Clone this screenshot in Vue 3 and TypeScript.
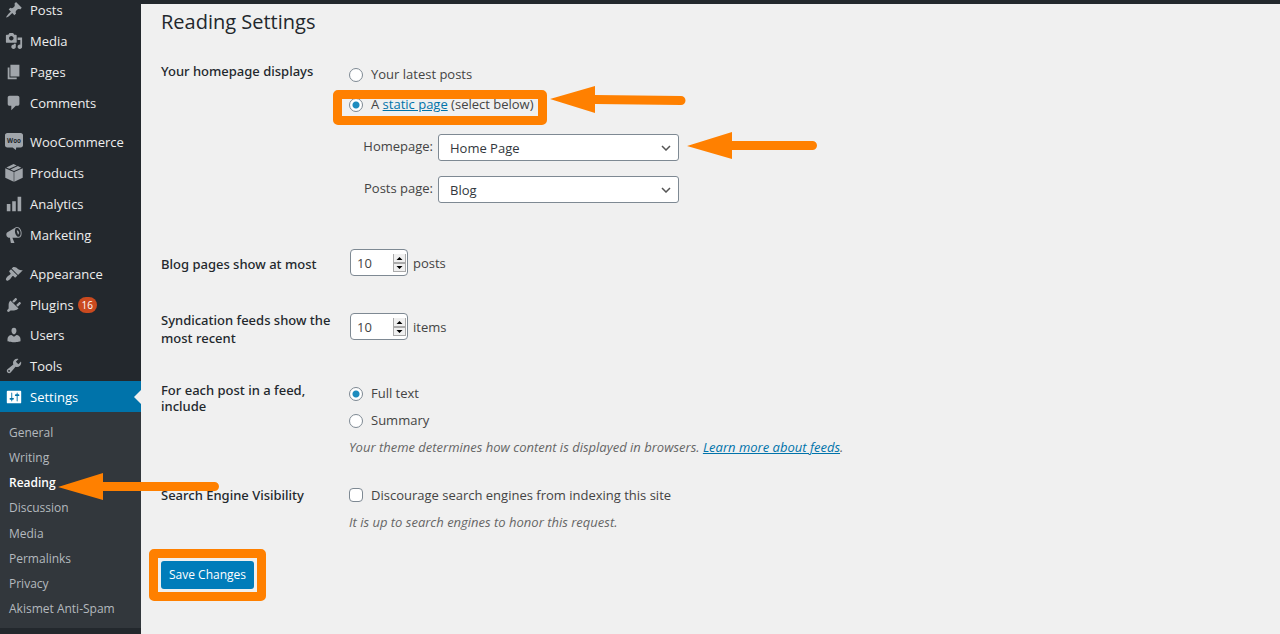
<script setup lang="ts">
import { ref } from 'vue'

interface MenuItem {
  label: string
  icon: string
  badge?: number
  woo?: boolean
  current?: boolean
}

const groups: MenuItem[][] = [
  [
    { label: 'Posts', icon: 'M10.44 3.02l1.82-1.82 6.36 6.35-1.83 1.82c-1.05-.68-2.48-.57-3.41.36l-.75.75c-.92.93-1.04 2.35-.35 3.41l-1.83 1.82-2.41-2.41-2.8 2.79c-.42.42-3.38 2.71-3.8 2.29s1.86-3.39 2.28-3.81l2.79-2.79L4.1 9.36l1.83-1.82c1.05.69 2.48.57 3.4-.36l.75-.75c.93-.92 1.05-2.35.36-3.41z' },
    { label: 'Media', icon: 'M13 11V4c0-.55-.45-1-1-1h-1.67L9 1H5L3.67 3H2c-.55 0-1 .45-1 1v7c0 .55.45 1 1 1h10c.55 0 1-.45 1-1zM7 4.5c1.38 0 2.5 1.12 2.5 2.5S8.38 9.5 7 9.5 4.5 8.38 4.5 7 5.62 4.5 7 4.5zM14 6h5v10.5c0 1.38-1.12 2.5-2.5 2.5S14 17.88 14 16.5s1.12-2.5 2.5-2.5c.17 0 .34.02.5.05V9h-3V6zm-4 8.05V13h2v3.5c0 1.38-1.12 2.5-2.5 2.5S7 17.88 7 16.5 8.12 14 9.5 14c.17 0 .34.02.5.05z' },
    { label: 'Pages', icon: 'M6 15V2h10v13H6zm-1 1h8v2H3V5h2v11z' },
    { label: 'Comments', icon: 'M5 2h9c1.1 0 2 .9 2 2v7c0 1.1-.9 2-2 2h-2l-5 5v-5H5c-1.1 0-2-.9-2-2V4c0-1.1.9-2 2-2z' },
  ],
  [
    { label: 'WooCommerce', icon: 'M2.500 0h15c1.400 0 2.500 1.100 2.500 2.500v11c0 1.400-1.100 2.500-2.500 2.500h-5l-.5 3-3.500-3h-6C1.100 16 0 14.900 0 13.500v-11C0 1.100 1.100 0 2.500 0z', woo: true },
    { label: 'Products', icon: 'M9.500 0L13 1.700 4.800 5.400 1.500 4zM14.300 2.200l3.900 1.900-8.200 3.800-3.900-1.800zM.3 4.800l9.400 4.200V19.800L.3 15.200zM19.700 4.800v10.400l-9.400 4.600V9z' },
    { label: 'Analytics', icon: 'M18 18V2h-4v16h4zm-6 0V7H8v11h4zm-6 0v-8H2v8h4z' },
    { label: 'Marketing', icon: 'M18.150 5.940c.46 1.620.38 3.220-.02 4.480-.42 1.280-1.260 2.180-2.300 2.480-.16.06-.26.06-.4.06-.06.02-.12.02-.18.02-.06.02-.14.02-.22.02h-6.800l2.220 5.500c.02.14-.06.26-.14.34-.08.1-.24.16-.34.16H6.950c-.1 0-.26-.06-.34-.16-.08-.08-.16-.2-.14-.34l-1-5.500H4.250l-.02-.02c-.5.06-1.080-.18-1.540-.62s-.88-1.080-1.060-1.880c-.24-.8-.2-1.560-.02-2.200.18-.62.58-1.080 1.060-1.300l.02-.02 9-5.400c.1-.06.18-.1.24-.16.06-.04.14-.08.24-.12.16-.08.28-.12.5-.18 1.040-.3 2.240.1 3.220.98s1.840 2.240 2.260 3.860zm-2.580 5.980h-.02c.4-.1.74-.34 1.040-.7.58-.7.86-1.760.86-3.040 0-.64-.1-1.300-.28-1.980-.34-1.360-1.020-2.500-1.780-3.240s-1.680-1.100-2.460-.88c-.82.22-1.400.96-1.700 2-.32 1.040-.28 2.360.06 3.720.38 1.360 1 2.500 1.800 3.240.78.74 1.620 1.100 2.480.88zM13 5.200c1-.4 2 .3 2.400 1.600s0 2.600-1 2.900z' },
  ],
  [
    { label: 'Appearance', icon: 'M14.480 11.060L7.410 3.990l1.500-1.500c.5-.56 2.300-.47 3.510.32 1.210.8 1.430 1.280 2.910 2.100 1.180.64 2.450 1.260 4.450.85zm-.71.71L6.700 4.700 4.930 6.470c-.39.39-.39 1.020 0 1.410l1.060 1.060c.39.39.39 1.030 0 1.420-.6.6-1.430 1.110-2.210 1.690-.35.26-.7.53-1.010.84C1.430 14.230.4 16.080 1.400 17.070c.99 1 2.840-.03 4.180-1.360.31-.31.58-.66.85-1.020.57-.78 1.080-1.610 1.690-2.210.39-.39 1.020-.39 1.410 0l1.060 1.060c.39.39 1.020.39 1.410 0z' },
    { label: 'Plugins', badge: 16, icon: 'M13.110 4.360L9.870 7.600 8 5.730l3.240-3.240c.35-.34 1.050-.2 1.560.32.52.51.66 1.210.31 1.550zm-8 1.770l.91-1.120 9.010 9.010-1.190.84c-.71.71-2.630 1.160-3.820 1.160H6.140L4.900 17.260c-.59.59-1.540.59-2.120 0-.59-.58-.59-1.530 0-2.120l1.240-1.240v-3.880c0-1.130.4-3.190 1.090-3.890zm7.260 3.970l3.240-3.240c.34-.35 1.040-.21 1.550.31.52.51.66 1.210.31 1.550l-3.240 3.250z' },
    { label: 'Users', icon: 'M10 9.250c-2.270 0-2.730-3.440-2.730-3.440C7 4.020 7.820 2 9.970 2c2.160 0 2.980 2.020 2.710 3.810 0 0-.41 3.440-2.680 3.440zm0 2.570L12.720 10c2.390 0 4.520 2.330 4.520 4.530v2.490s-3.650 1.130-7.240 1.130c-3.650 0-7.240-1.130-7.240-1.130v-2.490c0-2.250 1.940-4.480 4.470-4.480z' },
    { label: 'Tools', icon: 'M16.680 9.770c-1.340 1.340-3.300 1.670-4.950.99l-5.410 6.520c-.99.99-2.590.99-3.580 0s-.99-2.590 0-3.570l6.520-5.420c-.68-1.650-.35-3.610.99-4.950 1.280-1.280 3.120-1.620 4.720-1.060l-2.890 2.890 2.820 2.820 2.860-2.870c.53 1.580.18 3.390-1.080 4.650zM3.810 16.210c.4.39 1.040.39 1.430 0 .4-.4.4-1.040 0-1.430-.39-.4-1.030-.4-1.430 0-.39.39-.39 1.030 0 1.430z' },
    { label: 'Settings', current: true, icon: 'M18 16V4c0-.55-.45-1-1-1H3c-.55 0-1 .45-1 1v12c0 .55.45 1 1 1h14c.55 0 1-.45 1-1zM8 11h1c.55 0 1 .45 1 1s-.45 1-1 1H8v1.500c0 .28-.22.5-.5.5s-.5-.22-.5-.5V13H6c-.55 0-1-.45-1-1s.45-1 1-1h1V5.500c0-.28.22-.5.5-.5s.5.22.5.5V11zm5-2h-1c-.55 0-1-.45-1-1s.45-1 1-1h1V5.500c0-.28.22-.5.5-.5s.5.22.5.5V7h1c.55 0 1 .45 1 1s-.45 1-1 1h-1v5.500c0 .28-.22.5-.5.5s-.5-.22-.5-.5V9z' },
  ],
]

const submenu: string[] = ['General', 'Writing', 'Reading', 'Discussion', 'Media', 'Permalinks', 'Privacy', 'Akismet Anti-Spam']

const homepageDisplays = ref('page')
const homePage = ref('Home Page')
const postsPage = ref('Blog')
const postsPerPage = ref(10)
const feedItems = ref(10)
const feedContent = ref('full')
const discourage = ref(false)
</script>

<template>
  <div class="admin">
    <div class="topbar"></div>
    <nav class="sidebar" aria-label="Main menu">
      <ul v-for="(group, g) in groups" :key="g" class="group" :class="{ long: group.length > 4 }">
        <li v-for="item in group" :key="item.label" class="entry">
          <a href="#" class="item" :class="{ current: item.current }">
            <svg class="icon" viewBox="0 0 20 20" aria-hidden="true">
              <path :d="item.icon" fill-rule="evenodd" />
              <text v-if="item.woo" x="10" y="11" text-anchor="middle" class="woo">Woo</text>
            </svg>
            <span>{{ item.label }}</span>
            <span v-if="item.badge" class="badge">{{ item.badge }}</span>
          </a>
        </li>
      </ul>
      <ul class="submenu">
        <li v-for="name in submenu" :key="name" class="subentry">
          <a href="#" class="subitem" :class="{ active: name === 'Reading' }">{{ name }}</a>
          <svg v-if="name === 'Reading'" class="arrow arrow-menu" viewBox="0 0 162 28" aria-hidden="true">
            <path d="M0 14L45 0V9H156.500a4.500 4.500 0 0 1 0 9H45V27z" />
          </svg>
        </li>
      </ul>
    </nav>

    <main class="content">
      <h1>Reading Settings</h1>
      <form @submit.prevent>
        <div class="row row-home" role="group" aria-labelledby="t-home">
          <div id="t-home" class="title">Your homepage displays</div>
          <div class="field">
            <div class="options wide">
              <label class="option"><input v-model="homepageDisplays" type="radio" name="show" value="posts" /><span>Your latest posts</span></label>
              <div class="option marked">
                <input id="show-page" v-model="homepageDisplays" type="radio" name="show" value="page" />
                <label for="show-page">A <a href="#">static page</a> (select below)</label>
                <svg class="arrow arrow-option" viewBox="0 0 136 28" aria-hidden="true">
                  <path d="M0 13L45 0V9L131 10a4.500 4.500 0 0 1 0 9L45 18V27z" />
                </svg>
              </div>
            </div>
            <div class="selects">
              <div class="pick">
                <label for="home">Homepage:</label>
                <span class="select">
                  <select id="home" v-model="homePage"><option>Home Page</option></select>
                  <svg class="chevron" viewBox="0 0 10 6" aria-hidden="true"><path d="M1 1l4 4 4-4" /></svg>
                </span>
                <svg class="arrow arrow-select" viewBox="0 0 130 28" aria-hidden="true">
                  <path d="M0 14L45 0V9H125.500a4.500 4.500 0 0 1 0 9H45V27z" />
                </svg>
              </div>
              <div class="pick">
                <label for="blog">Posts page:</label>
                <span class="select">
                  <select id="blog" v-model="postsPage"><option>Blog</option></select>
                  <svg class="chevron" viewBox="0 0 10 6" aria-hidden="true"><path d="M1 1l4 4 4-4" /></svg>
                </span>
              </div>
            </div>
          </div>
        </div>

        <div class="row row-posts">
          <label class="title" for="per-page">Blog pages show at most</label>
          <div class="field amount">
            <span class="number">
              <input id="per-page" v-model="postsPerPage" type="number" />
              <svg class="spinner" viewBox="0 0 13 18" aria-hidden="true">
                <rect width="13" height="18" class="spin-edge" /><path d="M1 0H12V8H1zM1 10H12V17H1z" class="spin-face" /><path d="M3.500 6L6.500 3L9.500 6zM3.500 12L6.500 15L9.500 12z" />
              </svg>
            </span>
            <span>posts</span>
          </div>
        </div>

        <div class="row row-feed">
          <label class="title" for="per-feed">Syndication feeds show the most recent</label>
          <div class="field amount">
            <span class="number">
              <input id="per-feed" v-model="feedItems" type="number" />
              <svg class="spinner" viewBox="0 0 13 18" aria-hidden="true">
                <rect width="13" height="18" class="spin-edge" /><path d="M1 0H12V8H1zM1 10H12V17H1z" class="spin-face" /><path d="M3.500 6L6.500 3L9.500 6zM3.500 12L6.500 15L9.500 12z" />
              </svg>
            </span>
            <span>items</span>
          </div>
        </div>

        <div class="row row-include" role="group" aria-labelledby="t-include">
          <div id="t-include" class="title">For each post in a feed, include</div>
          <div class="field">
            <div class="options">
              <label class="option"><input v-model="feedContent" type="radio" name="feed" value="full" /><span>Full text</span></label>
              <label class="option"><input v-model="feedContent" type="radio" name="feed" value="summary" /><span>Summary</span></label>
            </div>
            <p>Your theme determines how content is displayed in browsers. <a href="#">Learn more about feeds</a>.</p>
          </div>
        </div>

        <div class="row row-search" role="group" aria-labelledby="t-search">
          <div id="t-search" class="title">Search Engine Visibility</div>
          <div class="field">
            <label class="option"><input v-model="discourage" type="checkbox" /><span>Discourage search engines from indexing this site</span></label>
            <p>It is up to search engines to honor this request.</p>
          </div>
        </div>

        <div class="submit"><button type="submit">Save Changes</button></div>
      </form>
    </main>
  </div>
</template>

<style>
body {
  margin: 0;
  background: #f0f0f0;
}
</style>

<style scoped>
.admin {
  display: grid;
  grid-template: 4px 1fr / 141px 1fr;
  min-height: 100vh;
  overflow: hidden;
  color: #444;
  font: 13px/18px 'Open Sans', 'Noto Sans', sans-serif;
}
.topbar {
  grid-column: 1 / 3;
  background: #23282d;
}
ul {
  margin: 0;
  padding: 0;
  list-style: none;
}
.sidebar {
  position: relative;
  z-index: 1;
  margin-top: -9px;
  background: #23282d;
}
.group {
  display: grid;
  grid-auto-rows: 1fr;
  height: 123px;
  margin-bottom: 9px;
}
.group.long {
  height: 153px;
  margin-bottom: 0;
}
.item {
  position: relative;
  display: flex;
  align-items: center;
  height: 100%;
  padding-left: 5px;
  color: #eee;
  text-decoration: none;
}
.icon {
  width: 18px;
  height: 18px;
  margin-right: 7px;
  fill: #a0a5aa;
}
.woo {
  fill: #23282d;
  font: bold 7px 'Open Sans', sans-serif;
}
.current {
  background: #0073aa;
  color: #fff;
}
.current .icon {
  fill: #fff;
}
.current::after {
  position: absolute;
  right: 0;
  border: 7px solid transparent;
  border-right-color: #f0f0f0;
  border-left: 0;
  content: '';
}
.badge {
  margin-left: 4px;
  padding: 0 4px;
  border-radius: 8px;
  background: #ca4a1f;
  color: #fff;
  font-size: 10px;
  line-height: 16px;
}
.submenu {
  display: grid;
  grid-auto-rows: 1fr;
  height: 202px;
  padding: 8px 0 6px;
  background: #32373c;
}
.subentry {
  position: relative;
  display: flex;
  align-items: center;
  padding-left: 9px;
}
.subitem {
  color: #b4b9be;
  font-size: 12px;
  text-decoration: none;
}
.subitem.active {
  color: #fff;
  font-weight: 600;
}
.content {
  padding: 4px 20px;
}
h1 {
  margin: 0;
  color: #23282d;
  font-size: 20px;
  font-weight: 400;
  line-height: 28px;
}
.row {
  display: grid;
  grid-template-columns: 176px 1fr;
  column-gap: 12px;
}
.title {
  color: #23282d;
  font-family: 'Noto Sans', 'Open Sans', sans-serif;
  font-weight: 500;
}
.row-home {
  margin-top: 26px;
}
.row-posts {
  margin-top: 46px;
}
.row-posts .title {
  padding-top: 6px;
}
.row-feed {
  margin-top: 35px;
}
.row-feed .amount {
  margin-top: 2px;
}
.row-include {
  margin-top: 35px;
}
.row-include .title {
  line-height: 16px;
}
.row-include .options {
  padding-top: 1px;
}
.row-search {
  margin-top: 29px;
}
.row-search .title {
  padding-top: 1px;
}
.options {
  display: grid;
  gap: 7px;
}
.options.wide {
  gap: 10px;
  padding-top: 2px;
}
.option {
  display: flex;
  align-items: center;
  width: fit-content;
  height: 20px;
  gap: 8px;
}
.option input {
  box-sizing: border-box;
  width: 14px;
  height: 14px;
  margin: 2px 0 0;
  border: 1px solid #7e8993;
  border-radius: 50%;
  background: #fff;
  appearance: none;
}
.option input[type='checkbox'] {
  margin: 0;
  border-radius: 4px;
}
.option input[type='radio']:checked {
  background: radial-gradient(circle, #1e8cbe 3px, #fff 4px);
}
a {
  color: #0073aa;
}
.marked {
  position: relative;
}
.marked::after,
.submit::after {
  position: absolute;
  border: 9px solid #ff8000;
  border-radius: 5px;
  content: '';
}
.marked::after {
  inset: -4px -13px -11px -16px;
  pointer-events: none;
}
.arrow {
  position: absolute;
  height: 28px;
  fill: #ff8000;
}
.arrow-menu {
  top: 2px;
  left: 58px;
  width: 162px;
}
.arrow-option {
  top: -8px;
  left: 201px;
  width: 136px;
}
.arrow-select {
  top: -2px;
  left: 338px;
  width: 130px;
}
.selects {
  display: grid;
  gap: 15px;
  margin-top: 20px;
}
.pick {
  position: relative;
  display: grid;
  grid-template-columns: 84px 241px;
  align-items: center;
  column-gap: 5px;
}
.pick label {
  padding-bottom: 3px;
  text-align: right;
}
.select {
  position: relative;
}
select {
  display: block;
  box-sizing: border-box;
  width: 100%;
  height: 27px;
  padding: 0 11px;
  border: 1px solid #7e8993;
  border-radius: 3px;
  background: #fff;
  color: #32373c;
  font: inherit;
  appearance: none;
}
.chevron {
  position: absolute;
  top: 11px;
  right: 8px;
  width: 10px;
  height: 6px;
  fill: none;
  stroke: #555;
  stroke-width: 1.500;
}
.amount {
  display: flex;
  align-items: center;
  height: 27px;
  gap: 5px;
}
.number {
  position: relative;
  margin-left: 1px;
}
.number input {
  display: block;
  box-sizing: border-box;
  width: 58px;
  height: 27px;
  padding: 0 6px;
  border: 1px solid #7e8993;
  border-radius: 4px;
  background: #fff;
  color: #444;
  font: inherit;
  appearance: textfield;
}
.spinner {
  position: absolute;
  top: 5px;
  right: 2px;
  width: 13px;
  height: 18px;
}
.spin-edge {
  fill: #aaa;
}
.spin-face {
  fill: #f0f0f0;
}
p {
  margin: 8px 0 0;
  color: #666;
  font-style: italic;
}
.submit {
  position: relative;
  width: fit-content;
  margin-top: 30px;
}
.submit::after {
  inset: -12px;
  pointer-events: none;
}
button {
  display: block;
  height: 28px;
  padding: 0 8px;
  border: 0;
  border-radius: 3px;
  background: #007cba;
  color: #fff;
  font: 12px/28px 'Open Sans', 'Noto Sans', sans-serif;
}
</style>
